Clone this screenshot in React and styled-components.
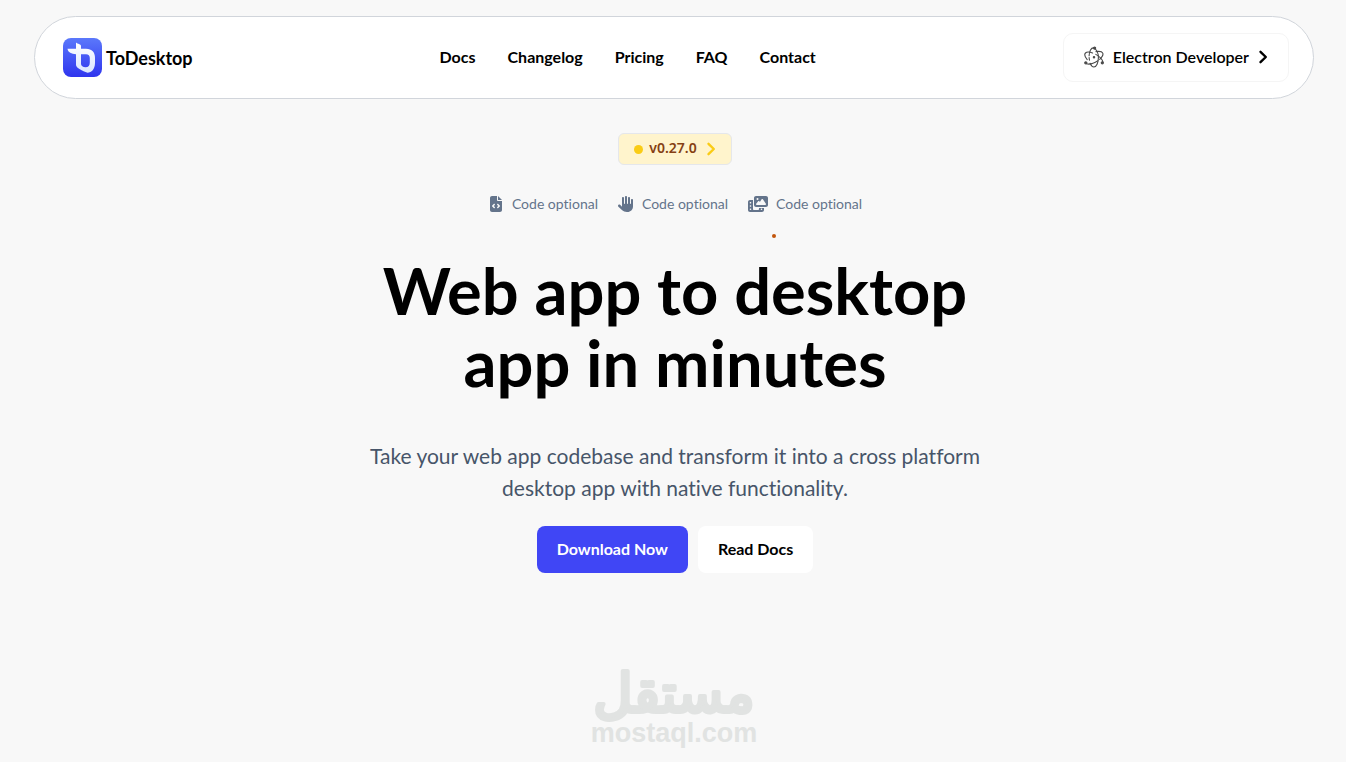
import React from "react";
import styled, { createGlobalStyle } from "styled-components";
import { FaFileCode, FaHand, FaPhotoFilm } from "react-icons/fa6";

const GlobalStyle = createGlobalStyle`
  * { box-sizing: border-box; }
  body {
    margin: 0;
    background: #f8f8f8;
    color: #000;
    font-family: Lato, "Noto Sans", sans-serif;
    font-size: 16px;
    line-height: 24px;
    font-variant-ligatures: none;
  }
  button { font: inherit; color: inherit; cursor: pointer; }
  a { color: inherit; text-decoration: none; }
`;

const Page = styled.div`
  padding: 16px 32px 12px 34px;
`;

const Header = styled.header`
  display: flex;
  align-items: center;
  justify-content: space-between;
  max-width: 1280px;
  margin: 0 auto;
  padding: 16px 24px 16px 28px;
  background: #fff;
  border: 1px solid #d1d5db;
  border-radius: 42px;
`;

const Brand = styled.a`
  display: flex;
  align-items: center;
  gap: 4px;
  font-size: 18px;
  font-weight: 700;
  svg { display: block; }
`;

const Nav = styled.nav`
  display: flex;
  gap: 32px;
  padding-bottom: 2px;
`;

const NavLink = styled.a`
  font-weight: 700;
`;

const RoleButton = styled.button`
  display: flex;
  align-items: center;
  gap: 9px;
  height: 49px;
  padding: 0 20px 2px;
  background: #fff;
  border: 1px solid #f5f5f5;
  border-radius: 10px;
  font-weight: 600;
`;

const Hero = styled.main`
  display: flex;
  flex-direction: column;
  align-items: center;
  padding: 34px 0 0 2px;
  text-align: center;
`;

const Version = styled.a`
  display: flex;
  align-items: center;
  height: 32px;
  padding: 0 15px 2px;
  background: #fff4cc;
  border: 1px solid #e5e7eb;
  border-radius: 6px;
  color: #854013;
  font-family: "Noto Sans", sans-serif;
  font-size: 14px;
  font-weight: 600;
  svg { margin: 2px 0 0 9px; color: #facc15; }
`;

const Dot = styled.span`
  width: 9px;
  height: 9px;
  margin: 2px 6px 0 0;
  border-radius: 50%;
  background: #facc15;
`;

const Features = styled.ul`
  display: flex;
  gap: 20px;
  margin: 27px 0 0;
  padding: 0;
  list-style: none;
  color: #64748b;
  font-size: 14px;
`;

const Feature = styled.li`
  display: flex;
  align-items: center;
  gap: 8px;
`;

const Speck = styled.span`
  width: 4px;
  height: 4px;
  margin: 18px 0 16px 198px;
  border-radius: 50%;
  background: #c2560c;
`;

const Title = styled.h1`
  max-width: 640px;
  margin: 0;
  font-size: 65px;
  line-height: 72px;
  font-weight: 700;
`;

const Lead = styled.p`
  max-width: 640px;
  margin: 42px 0 0;
  color: #475569;
  font-size: 21px;
  line-height: 32px;
`;

const Actions = styled.div`
  display: flex;
  gap: 10px;
  margin-top: 22px;
`;

const ActionButton = styled.button`
  height: 47px;
  padding: 0 20px 2px;
  border: 0;
  border-radius: 8px;
  background: ${(p) => (p.$primary ? "#4046f5" : "#fff")};
  color: ${(p) => (p.$primary ? "#fff" : "#000")};
  font-weight: 700;
`;

const Watermark = styled.footer`
  display: flex;
  flex-direction: column;
  align-items: center;
  margin-top: 88px;
  color: #e1e3e2;
  svg { display: block; overflow: visible; }
`;

const LatinName = styled.span`
  font-family: "Liberation Sans", Arial, sans-serif;
  font-size: 27px;
  line-height: 28px;
  font-weight: 700;
`;

function Logo() {
  return (
    <svg width="39" height="39" viewBox="0 0 39 39" aria-hidden="true">
      <defs>
        <linearGradient id="tile" x1="0" y1="0" x2="0" y2="1">
          <stop offset="0" stopColor="#5b78fb" />
          <stop offset="1" stopColor="#2f35ee" />
        </linearGradient>
        <linearGradient id="mark" x1="0" y1="0" x2="0" y2="1">
          <stop offset="0" stopColor="#ffffff" />
          <stop offset="1" stopColor="#dbe6ff" />
        </linearGradient>
      </defs>
      <rect width="39" height="39" rx="8" fill="url(#tile)" />
      <path
        d="M13 4.5 C14.5 6 18 6 18 8 V10.8 H23 C29 10.8 32 14.5 32 20 V25 C32 31 28.5 34.8 24.5 34.8 C19.5 33 13 30 13 27 V16.2 C8.5 16 5 14.5 4.5 10.8 H13 Z M18 16.2 V26 C18 28 20 29 22.5 29.2 C25.5 29.2 26.8 27.5 26.8 24.5 V20 C26.8 17.5 25.5 16.2 23 16.2 Z"
        fill="url(#mark)"
        fillRule="evenodd"
      />
    </svg>
  );
}

function Atom() {
  return (
    <svg width="20" height="22" viewBox="0 0 20 22" fill="none" stroke="#4a4a4a" strokeWidth="1.1" strokeLinecap="round" aria-hidden="true">
      <path d="M3.2 13.6 C.8 10.8 .2 8.3 1.5 7 C2.7 5.8 5.4 5.8 8.6 7" />
      <path d="M11.8 8.4 C16 10.9 18.6 14 18.9 16" />
      <path d="M12 5.6 C15.4 5.1 18 5.5 18.7 7 C19.5 8.6 18.2 11 15.7 13.3" />
      <path d="M13.8 14.8 C9.8 17.4 5.4 18.6 2.6 17.8" />
      <path d="M5.1 9.7 C5.3 5.2 7.2 1.8 9.4 1.9" />
      <path d="M11.4 3.2 C13.2 5 14.4 8 14.4 11.4 C14.4 16.8 12.4 21 10 21 C8.4 21 7 19.6 6.1 17.3" />
      <path d="M5.1 11.5 C5.2 12.6 5.3 13.4 5.5 14.2" />
      <circle cx="10" cy="11.3" r=".7" fill="#4a4a4a" />
      <circle cx="10.6" cy="2.1" r="1.1" fill="#4a4a4a" />
      <circle cx="1.8" cy="16.8" r="1.1" fill="#4a4a4a" />
      <circle cx="18.3" cy="16.8" r="1.1" fill="#4a4a4a" />
    </svg>
  );
}

function Chevron({ size }) {
  return (
    <svg width={size - 4} height={size} viewBox="0 0 10 14" fill="none" stroke="currentColor" strokeWidth="2.4" strokeLinejoin="round" strokeLinecap="round" aria-hidden="true">
      <path d="M2.5 1.8 L7.8 7 L2.5 12.2" />
    </svg>
  );
}

function ArabicName() {
  return (
    <svg width="170" height="58" viewBox="0 0 170 58" role="img" aria-label="مستقل">
      <text
        x="85"
        y="51"
        textAnchor="middle"
        fontFamily='"DejaVu Sans", sans-serif'
        fontSize="54"
        fill="currentColor"
        stroke="currentColor"
        strokeWidth="4"
        strokeLinejoin="round"
      >
        مستقل
      </text>
    </svg>
  );
}

const links = ["Docs", "Changelog", "Pricing", "FAQ", "Contact"];

export default function App() {
  return (
    <>
      <GlobalStyle />
      <Page>
        <Header>
          <Brand href="#">
            <Logo />
            ToDesktop
          </Brand>
          <Nav>
            {links.map((label) => (
              <NavLink key={label} href="#">{label}</NavLink>
            ))}
          </Nav>
          <RoleButton type="button">
            <Atom />
            Electron Developer
            <Chevron size={14} />
          </RoleButton>
        </Header>
        <Hero>
          <Version href="#">
            <Dot />
            v0.27.0
            <Chevron size={14} />
          </Version>
          <Features>
            <Feature><FaFileCode size={16} />Code optional</Feature>
            <Feature><FaHand size={16} />Code optional</Feature>
            <Feature><FaPhotoFilm size={20} />Code optional</Feature>
          </Features>
          <Speck />
          <Title>Web app to desktop app in minutes</Title>
          <Lead>
            Take your web app codebase and transform it into a cross platform
            desktop app with native functionality.
          </Lead>
          <Actions>
            <ActionButton type="button" $primary>Download Now</ActionButton>
            <ActionButton type="button">Read Docs</ActionButton>
          </Actions>
        </Hero>
        <Watermark>
          <ArabicName />
          <LatinName>mostaql.com</LatinName>
        </Watermark>
      </Page>
    </>
  );
}
